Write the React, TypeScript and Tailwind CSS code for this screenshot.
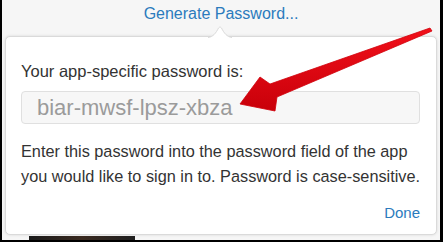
export default function App() {
  return (
    <div className="relative h-[242px] w-[443px] overflow-hidden border-b-2 border-l-2 border-r-[3px] border-black bg-[#f6f6f6] font-['Liberation_Sans',Arial,sans-serif]">
      <div className="pt-[4px] text-center text-[16px] leading-[20px] text-[#2b7bbd]">Generate Password...</div>

      <div className="relative mt-[12px] ml-[3px] h-[199px] w-[432px] rounded-[5px] border border-[#dadada] bg-white pl-[15px] pr-[16px] pt-[24px] pb-[11px] shadow-[0_0_3px_rgba(0,0,0,0.12)]">
        <svg className="absolute -top-[11px] left-[202px]" width="24" height="12" viewBox="0 0 24 12">
          <path d="M0 11.5 C5 11 8 7 10.5 2 Q12 -0.5 13.5 2 C16 7 19 11 24 11.5 L24 12 L0 12 Z" fill="#ffffff" />
          <path d="M0 11.5 C5 11 8 7 10.5 2 Q12 -0.5 13.5 2 C16 7 19 11 24 11.5" fill="none" stroke="#dadada" strokeWidth="1" />
        </svg>

        <div className="text-[16.5px] leading-[20px] text-[#333333]">Your app-specific password is:</div>

        <div className="mt-[10px] h-[33px] rounded-[4px] border border-[#e0e0e0] bg-[#f7f7f7] px-[15px] text-[22px] leading-[31px] text-[#9b9b9b]">
          biar-mwsf-lpsz-xbza
        </div>

        <p className="mt-[15px] whitespace-nowrap text-[16.3px] leading-[25px] text-[#333333]">
          Enter this password into the password field of the app
          <br />
          you would like to sign in to. Password is case-sensitive.
        </p>

        <div className="mt-[14px] text-right text-[15px] leading-[20px] text-[#2b7bbd]">Done</div>
      </div>

      <div className="mt-[1px] ml-[27px] h-[4px] w-[106px] bg-gradient-to-r from-[#1b1b1b] via-[#3a2a20] to-[#202020]" />

      <svg className="pointer-events-none absolute -left-[2px] top-0" width="443" height="242" viewBox="0 0 443 242">
        <defs>
          <linearGradient id="arrowRed" x1="0" y1="0" x2="0" y2="1">
            <stop offset="0" stopColor="#f2101a" />
            <stop offset="1" stopColor="#c8000a" />
          </linearGradient>
        </defs>
        <polygon
          points="430,28 270,84 260,77 240,104 275,111 277,97 432,31"
          fill="url(#arrowRed)"
          stroke="#d0000a"
          strokeWidth="0.8"
          strokeLinejoin="round"
        />
      </svg>
    </div>
  );
}
